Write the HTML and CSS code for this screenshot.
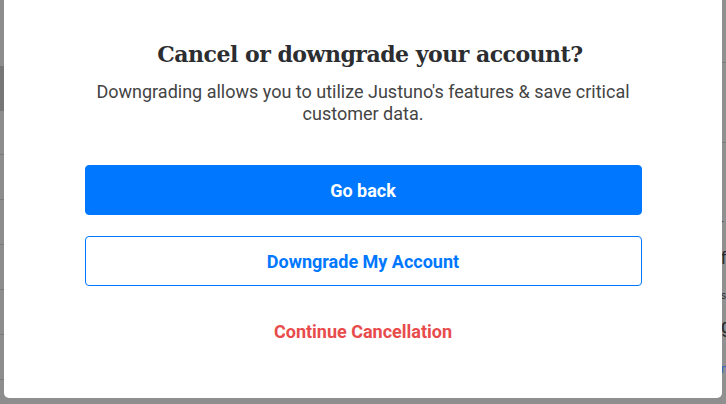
FILE: index.html
```html
<!DOCTYPE html>
<html lang="en">
<head>
<meta charset="utf-8">
<title>Cancel or downgrade</title>
<link rel="stylesheet" href="styles.css">
</head>
<body>
<div class="page">
  <div class="side side-left">
    <div class="l-top"></div>
    <div class="l-band"></div>
    <div class="l-row l-first"></div>
    <div class="l-row"></div>
    <div class="l-row"></div>
    <div class="l-row"></div>
    <div class="l-row"></div>
    <div class="l-row"></div>
  </div>
  <div class="modal">
    <h1 class="title">Cancel or downgrade your account?</h1>
    <p class="lead">Downgrading allows you to utilize Justuno's features &amp; save critical customer data.</p>
    <div class="actions">
      <button class="btn btn-primary">Go back</button>
      <button class="btn btn-outline">Downgrade My Account</button>
      <button class="btn btn-link">Continue Cancellation</button>
    </div>
  </div>
  <div class="side side-right">
    <div class="r-row r-a"></div>
    <div class="r-row r-b"></div>
    <div class="r-text r-t1">·</div>
    <div class="r-text r-t2">f</div>
    <div class="r-text r-t3">s</div>
    <div class="r-text r-t4">g</div>
    <div class="r-text r-t5">n</div>
  </div>
</div>
</body>
</html>
```

FILE: styles.css
```css
html, body {
  margin: 0;
  padding: 0;
  background: #8e8e8e;
  width: 726px;
  height: 404px;
  overflow: hidden;
}

.page {
  display: flex;
  flex-direction: row;
  align-items: flex-start;
  height: 404px;
}

.side {
  width: 4px;
  flex: 0 0 4px;
  height: 404px;
  overflow: hidden;
  display: flex;
  flex-direction: column;
}

.side-left { background: #8d8d8d; }
.l-top { height: 66px; flex: 0 0 66px; }
.l-band { height: 45px; flex: 0 0 45px; background: #767676; }
.l-row { height: 44px; flex: 0 0 44px; border-bottom: 1px solid #7b7b7b; }
.l-first { height: 43px; flex: 0 0 43px; }

.side-right { background: #909090; }
.r-row { flex: 0 0 auto; border-bottom: 1px solid #7e7e7e; }
.r-a { height: 62px; }
.r-b { height: 79px; }
.r-text {
  font-family: "Liberation Sans", Arial, sans-serif;
  color: #2a2a2a;
  line-height: 1;
  margin-left: -1px;
  white-space: nowrap;
}
.r-t1 { margin-top: 74px; font-size: 10px; }
.r-t2 { margin-top: 22px; font-size: 18px; }
.r-t3 { margin-top: 24px; font-size: 10px; }
.r-t4 { margin-top: 15px; font-size: 20px; }
.r-t5 { margin-top: 27px; font-size: 12px; color: #2f5fc0; }

.modal {
  width: 718px;
  flex: 0 0 718px;
  height: 398px;
  background: #ffffff;
  border-radius: 0 0 5px 5px;
  display: flex;
  flex-direction: column;
  align-items: center;
  box-sizing: border-box;
  padding-top: 39px;
}

.title {
  margin: 0 0 0 14px;
  font-family: "DejaVu Serif", "Liberation Serif", serif;
  font-weight: bold;
  font-size: 22px;
  line-height: 30px;
  color: #2c2d30;
  letter-spacing: -0.5px;
}

.lead {
  margin: 12px 0 0;
  width: 570px;
  text-align: center;
  font-family: Roboto, "Liberation Sans", sans-serif;
  font-size: 18px;
  line-height: 22px;
  color: #444444;
}

.actions {
  margin-top: 40px;
  width: 557px;
  display: flex;
  flex-direction: column;
  gap: 21px;
}

.btn {
  display: block;
  width: 100%;
  height: 50px;
  margin: 0;
  padding: 0;
  border-radius: 4px;
  font-family: Roboto, "Liberation Sans", sans-serif;
  font-weight: bold;
  font-size: 18px;
  cursor: pointer;
}

.btn-primary {
  background: #0077ff;
  border: 1px solid #0077ff;
  color: #ffffff;
}

.btn-outline {
  background: #ffffff;
  border: 1px solid #0077ff;
  color: #0077ff;
}

.btn-link {
  background: transparent;
  border: none;
  color: #e84b4b;
  margin-top: -1px;
}
```
